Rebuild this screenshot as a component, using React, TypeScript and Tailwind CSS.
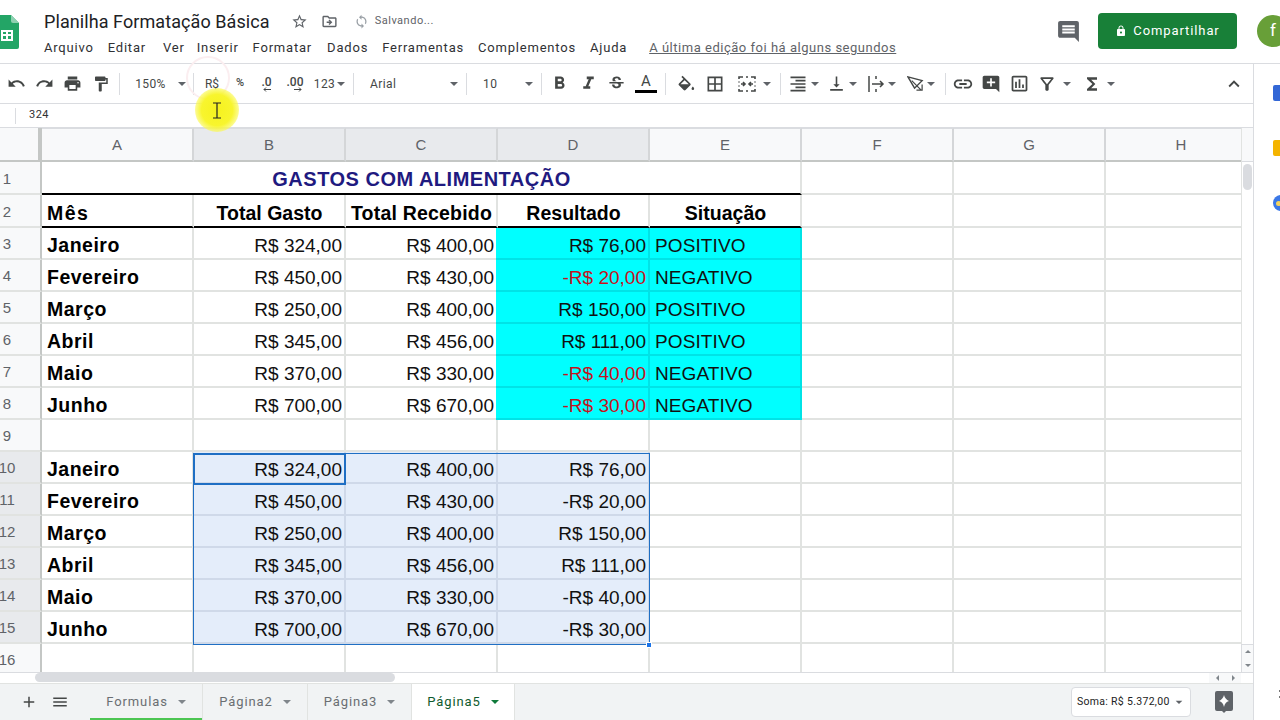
import React from 'react';
import {
  MdUndo, MdRedo, MdPrint, MdFormatPaint, MdFormatBold, MdFormatItalic, MdStrikethroughS,
  MdBorderAll, MdFormatAlignRight, MdVerticalAlignBottom, MdInsertLink,
  MdAddComment, MdOutlineInsertChart, MdOutlineFilterAlt, MdFunctions, MdExpandLess, MdComment, MdLock,
  MdStarBorder, MdOutlineDriveFileMove, MdSync, MdAdd, MdMenu, MdArrowDropDown,
} from 'react-icons/md';

const caret = <span className="inline-block w-0 h-0 border-l-[4px] border-r-[4px] border-t-[4px] border-l-transparent border-r-transparent border-t-[#5f6368]" />;

function Sep({ w = 'w-[8px]' }: { w?: string }) {
  return (
    <div className={`${w} flex justify-center`}>
      <div className="w-px h-[22px] bg-[#dadce0]" />
    </div>
  );
}

function Tool({ w, children, className = '' }: { w: string; children: React.ReactNode; className?: string }) {
  return <div className={`${w} ${className} h-full flex items-center justify-center shrink-0 text-[#444746]`}>{children}</div>;
}

function SheetsLogo() {
  return (
    <svg width="24" height="34" viewBox="0 0 24 34" className="-ml-[5px]">
      <path d="M0 2a2 2 0 0 1 2-2h14l8 8v24a2 2 0 0 1-2 2H2a2 2 0 0 1-2-2z" fill="#23a566" />
      <path d="M16 0l8 8h-6a2 2 0 0 1-2-2z" fill="#8ed1b1" />
      <path d="M6 15h12v11H6z M8 17v2h3v-2z M13 17v2h3v-2z M8 21v3h3v-3z M13 21v3h3v-3z" fill="#fff" fillRule="evenodd" />
    </svg>
  );
}

function FillIcon() {
  return (
    <svg width="19" height="19" viewBox="0 0 22 18" fill="#444746">
      <path fillRule="evenodd" d="M16.560 8.940L7.620 0 6.210 1.410l2.380 2.380-5.150 5.150c-.59.59-.59 1.540 0 2.120l5.500 5.500c.29.29.68.44 1.060.44s.77-.15 1.060-.44l5.500-5.500c.59-.58.59-1.530 0-2.120zM5.210 10L10 5.210 14.790 10H5.210z" />
      <path d="M19.500 12.500s-1.500 1.500-1.500 2.500a1.500 1.500 0 0 0 3 0c0-1-1.500-2.500-1.500-2.500z" />
    </svg>
  );
}

function MergeIcon() {
  return (
    <svg width="18" height="18" viewBox="0 0 18 18" fill="none" stroke="#444746" strokeWidth="1.6">
      <path d="M1 4V2h4M8 2h2M13 2h4v2M1 14v2h4M8 16h2M13 16h4v-2" />
      <path d="M1 6.500v1M1 10.500v1M17 6.500v1M17 10.500v1" />
      <path d="M3 9h4M5 7l2 2-2 2M15 9h-4M13 7l-2 2 2 2" />
    </svg>
  );
}

function WrapIcon() {
  return (
    <svg width="18" height="18" viewBox="0 0 18 18" fill="none" stroke="#444746" strokeWidth="1.500">
      <path d="M2 1v16" />
      <path d="M9 1v3M9 14v3" />
      <path d="M5 9h11M13 6l3 3-3 3" />
    </svg>
  );
}

function RotateIcon() {
  return (
    <svg width="17" height="17" viewBox="0 0 18 18" fill="none" stroke="#444746" strokeWidth="1.500">
      <path d="M1 2l15 4-8 8z" />
      <path d="M5 6l10 10M16 10v6h-6" strokeWidth="1.300" />
    </svg>
  );
}

function SmallArrow({ right }: { right?: boolean }) {
  return (
    <svg width="8" height="5" viewBox="0 0 8 5" fill="none" stroke="#444746" strokeWidth="1" className={`absolute top-[14px] ${right ? 'left-[7px]' : 'left-[2px]'}`}>
      {right ? <path d="M0 2.500h7M5 .500l2 2-2 2" /> : <path d="M8 2.500H1M3 .500l-2 2 2 2" />}
    </svg>
  );
}

function Toolbar() {
  return (
    <div className="h-[40px] flex items-center pl-[2px] pr-[4px] border-b border-[#dadce0] text-[12px] tracking-[0.4px] text-[#444746]">
      <Tool w="w-[28px]"><MdUndo size={19} /></Tool>
      <Tool w="w-[28px]"><MdRedo size={19} /></Tool>
      <Tool w="w-[29px]"><MdPrint size={19} /></Tool>
      <Tool w="w-[28px]"><MdFormatPaint size={18} /></Tool>
      <Sep />
      <Tool w="w-[66px]" className="gap-[12px] pl-[9px]"><span>150%</span>{caret}</Tool>
      <Sep />
      <Tool w="w-[30px]"><span className="tracking-normal">R$</span></Tool>
      <Tool w="w-[26px]"><span className="font-medium tracking-normal text-[11px]">%</span></Tool>
      <Tool w="w-[27px]">
        <span className="relative font-medium tracking-normal -mt-[3px]">.0<SmallArrow /></span>
      </Tool>
      <Tool w="w-[30px]">
        <span className="relative font-medium tracking-normal -mt-[3px]">.00<SmallArrow right /></span>
      </Tool>
      <Tool w="w-[39px]" className="gap-[2px]"><span>123</span>{caret}</Tool>
      <Sep />
      <Tool w="w-[105px]" className="!justify-between pl-[13px] pr-[4px]"><span>Arial</span>{caret}</Tool>
      <Sep />
      <Tool w="w-[67px]" className="!justify-between pl-[13px] pr-[4px]"><span>10</span>{caret}</Tool>
      <Sep />
      <Tool w="w-[29px]"><MdFormatBold size={21} /></Tool>
      <Tool w="w-[28px]"><MdFormatItalic size={21} /></Tool>
      <Tool w="w-[29px]"><MdStrikethroughS size={19} /></Tool>
      <Tool w="w-[30px]">
        <span className="flex flex-col items-center">
          <span className="text-[15px] leading-[15px] tracking-normal">A</span>
          <span className="w-[22px] h-[3px] bg-black mt-[1px]" />
        </span>
      </Tool>
      <Sep />
      <Tool w="w-[30px]" className="ml-[1px]"><FillIcon /></Tool>
      <Tool w="w-[30px]"><MdBorderAll size={20} /></Tool>
      <Tool w="w-[46px]" className="gap-[7px] pl-[2px]"><MergeIcon />{caret}</Tool>
      <Sep />
      <Tool w="w-[38px]" className="gap-[3px]"><MdFormatAlignRight size={20} />{caret}</Tool>
      <Tool w="w-[40px]" className="gap-[3px]"><MdVerticalAlignBottom size={19} />{caret}</Tool>
      <Tool w="w-[39px]" className="gap-[3px]"><WrapIcon />{caret}</Tool>
      <Tool w="w-[40px]" className="gap-[3px]"><RotateIcon />{caret}</Tool>
      <Sep />
      <Tool w="w-[28px]"><MdInsertLink size={22} /></Tool>
      <Tool w="w-[28px]"><MdAddComment size={20} /></Tool>
      <Tool w="w-[28px]"><MdOutlineInsertChart size={21} /></Tool>
      <Tool w="w-[40px]" className="gap-[6px] ml-[1px]"><MdOutlineFilterAlt size={20} />{caret}</Tool>
      <Tool w="w-[40px]" className="gap-[5px] ml-[4px]"><MdFunctions size={20} />{caret}</Tool>
      <div className="ml-auto mr-[4px] text-[#444746]"><MdExpandLess size={22} /></div>
    </div>
  );
}

const columns = ['A', 'B', 'C', 'D', 'E', 'F', 'G', 'H'];
const colW = 'w-[152px]';

type Line = { mes: string; gasto: string; recebido: string; resultado: string; situacao: string };

const lines: Line[] = [
  { mes: 'Janeiro', gasto: 'R$ 324,00', recebido: 'R$ 400,00', resultado: 'R$ 76,00', situacao: 'POSITIVO' },
  { mes: 'Fevereiro', gasto: 'R$ 450,00', recebido: 'R$ 430,00', resultado: '-R$ 20,00', situacao: 'NEGATIVO' },
  { mes: 'Março', gasto: 'R$ 250,00', recebido: 'R$ 400,00', resultado: 'R$ 150,00', situacao: 'POSITIVO' },
  { mes: 'Abril', gasto: 'R$ 345,00', recebido: 'R$ 456,00', resultado: 'R$ 111,00', situacao: 'POSITIVO' },
  { mes: 'Maio', gasto: 'R$ 370,00', recebido: 'R$ 330,00', resultado: '-R$ 40,00', situacao: 'NEGATIVO' },
  { mes: 'Junho', gasto: 'R$ 700,00', recebido: 'R$ 670,00', resultado: '-R$ 30,00', situacao: 'NEGATIVO' },
];

function RowHead({ n, h, active }: { n: number; h: string; active?: boolean }) {
  return (
    <div className={`${h} w-[42px] shrink-0 border-r-2 border-b-2 border-r-[#c4c7c5] border-b-[#e1e3e1] pr-[26px] pt-[3px] flex items-center justify-center text-[15px] text-[#5f6368] ${active ? 'bg-[#e8eaed]' : 'bg-[#f8f9fa]'}`}>
      {n}
    </div>
  );
}

function Cell({ w = colW, className = '', children }: { w?: string; className?: string; children?: React.ReactNode }) {
  return (
    <div className={`${w} shrink-0 h-full flex items-center pl-[3px] pr-[2px] pt-[6px] whitespace-nowrap border-r-2 border-b-2 border-r-[#e1e3e1] border-b-[#e1e3e1] ${className}`}>
      {children}
    </div>
  );
}

function Row({ n, h = 'h-[32px]', active, children }: { n: number; h?: string; active?: boolean; children?: React.ReactNode }) {
  return (
    <div className={`${h} flex`}>
      <RowHead n={n} h={h} active={active} />
      {children}
    </div>
  );
}

function EmptyCells({ count }: { count: number }) {
  return (
    <>
      {Array.from({ length: count }).map((_, i) => (
        <Cell key={i} />
      ))}
    </>
  );
}

const money = 'justify-end text-[19px] text-[#111]';
const bold = 'font-bold text-[19.500px] tracking-[0.5px] text-black !pl-[5px]';
const headCell = 'justify-center text-[19.500px] font-bold !pt-[6px] !border-b-black';
const cyanCell = 'bg-[#00ffff] !border-r-[#00e3e6] !border-b-[#00e3e6]';
const selCell = 'bg-[#e4edfa] !border-r-[#cfd9e9] !border-b-[#cfd9e9]';

function Grid() {
  return (
    <div className="flex-1 flex min-h-0">
      <div className="flex-1 min-w-0 relative overflow-hidden font-['Liberation_Sans',Arial,sans-serif]">
        <div className="h-[34px] flex">
          <div className="w-[42px] shrink-0 bg-[#f8f9fa] border-b-2 border-r-[4px] border-b-[#c4c7c5] border-r-[#c4c7c5]" />
          {columns.map((c, i) => (
            <div
              key={c}
              className={`${colW} shrink-0 flex items-center justify-center pt-[2px] text-[15px] text-[#5f6368] border-t border-r-2 border-b-2 border-t-[#dadce0] border-r-[#d4d6d8] border-b-[#c4c7c5] ${i >= 1 && i <= 3 ? 'bg-[#e8eaed]' : 'bg-[#f8f9fa]'}`}
            >
              {c}
            </div>
          ))}
        </div>

        <Row n={1} h="h-[33px]">
          <Cell w="w-[760px]" className="justify-center text-[20px] font-bold text-[#1f1a80] tracking-[0.5px] !pt-[2px] !border-b-black">
            GASTOS COM ALIMENTAÇÃO
          </Cell>
          <EmptyCells count={3} />
        </Row>
        <Row n={2} h="h-[33px]">
          <Cell className={`${bold} !tracking-[1.500px] !pt-[6px] !border-b-black`}>Mês</Cell>
          <Cell className={headCell}>Total Gasto</Cell>
          <Cell className={`${headCell} tracking-[0.2px]`}>Total Recebido</Cell>
          <Cell className={headCell}>Resultado</Cell>
          <Cell className={headCell}>Situação</Cell>
          <EmptyCells count={3} />
        </Row>
        {lines.map((l, i) => (
          <Row key={l.mes} n={i + 3}>
            <Cell className={bold}>{l.mes}</Cell>
            <Cell className={money}>{l.gasto}</Cell>
            <Cell w="w-[150px]" className={`${money} !border-r-0`}>{l.recebido}</Cell>
            <Cell w="w-[154px]" className={`${money} ${cyanCell} ${l.resultado.startsWith('-') ? '!text-[#c5121d]' : ''}`}>{l.resultado}</Cell>
            <Cell className={`text-[19px] text-[#111] tracking-[0.1px] !pl-[5px] ${cyanCell}`}>{l.situacao}</Cell>
            <EmptyCells count={3} />
          </Row>
        ))}
        <Row n={9}>
          <EmptyCells count={8} />
        </Row>
        {lines.map((l, i) => (
          <Row key={l.mes} n={i + 10} active>
            <Cell className={bold}>{l.mes}</Cell>
            <Cell className={`${money} ${selCell}`}>{l.gasto}</Cell>
            <Cell className={`${money} ${selCell}`}>{l.recebido}</Cell>
            <Cell className={`${money} ${selCell}`}>{l.resultado}</Cell>
            <EmptyCells count={4} />
          </Row>
        ))}
        <Row n={16}>
          <EmptyCells count={8} />
        </Row>

        {/* selection overlay */}
        <div className="absolute left-[193px] top-[325px] w-[457px] h-[192px] border border-[#1f6fc4] pointer-events-none" />
        <div className="absolute left-[193px] top-[325px] w-[153px] h-[32px] border-2 border-[#1f6fc4] pointer-events-none" />
        <div className="absolute left-[646px] top-[514px] w-[6px] h-[6px] bg-[#1a73e8] border border-white" />

        {/* vertical scrollbar */}
        <div className="absolute right-0 top-0 bottom-0 w-[12px] bg-white border-l border-[#e1e3e1]">
          <div className="h-[34px] bg-[#f8f9fa] border-b border-[#dadce0]" />
          <div className="mx-[1px] mt-[2px] h-[26px] rounded-full bg-[#dadce0]" />
        </div>
        <div className="absolute right-0 bottom-[11px] w-[12px] h-[28px] bg-[#f8f9fa] border-l border-t border-[#dadce0] flex flex-col items-center justify-around">
          <span className="w-0 h-0 border-l-[3px] border-r-[3px] border-b-[3px] border-l-transparent border-r-transparent border-b-[#80868b]" />
          <span className="w-0 h-0 border-l-[3px] border-r-[3px] border-t-[3px] border-l-transparent border-r-transparent border-t-[#80868b]" />
        </div>

        {/* horizontal scrollbar */}
        <div className="absolute left-0 right-0 bottom-0 h-[11px] bg-white border-t border-[#dadce0]">
          <div className="absolute left-[35px] top-0 w-[360px] h-[9px] rounded-full bg-[#dadce0]" />
          <div className="absolute right-[12px] top-0 w-[32px] h-full flex items-center justify-around bg-[#f8f9fa]">
            <span className="w-0 h-0 border-t-[3px] border-b-[3px] border-r-[3px] border-t-transparent border-b-transparent border-r-[#80868b]" />
            <span className="w-0 h-0 border-t-[3px] border-b-[3px] border-l-[3px] border-t-transparent border-b-transparent border-l-[#80868b]" />
          </div>
        </div>
      </div>
    </div>
  );
}

function SheetTab({ label, w, active, first }: { label: string; w: string; active?: boolean; first?: boolean }) {
  return (
    <div className={`${w} h-full relative flex items-center justify-center gap-[10px] text-[13px] tracking-[0.9px] border-r border-[#e1e3e1] ${active ? 'bg-white text-[#0f5b2e]' : 'text-[#6a6e72]'}`}>
      <span>{label}</span>
      <span className={`inline-block w-0 h-0 border-l-[4px] border-r-[4px] border-t-[4px] border-l-transparent border-r-transparent ${active ? 'border-t-[#0f7a3a]' : 'border-t-[#80868b]'}`} />
      {first && <div className="absolute left-0 right-0 bottom-0 h-[2px] bg-[#4cc552]" />}
    </div>
  );
}

function Tabs() {
  return (
    <div className="h-[37px] shrink-0 flex items-center bg-[#f1f3f4] border-t border-[#e1e3e1] text-[#444746]">
      <div className="w-[90px] flex items-center pl-[20px] gap-[13px] h-full">
        <MdAdd size={18} />
        <MdMenu size={18} />
      </div>
      <SheetTab label="Formulas" w="w-[113px]" first />
      <SheetTab label="Página2" w="w-[105px]" />
      <SheetTab label="Página3" w="w-[104px]" />
      <SheetTab label="Página5" w="w-[103px]" active />
      <div className="ml-auto flex items-center h-[30px] w-[120px] bg-white rounded-[4px] border border-[#dadce0] px-[5px] justify-between text-[10.500px] text-[#222] tracking-[0.3px]">
        <span>Soma: R$ 5.372,00</span>
        <MdArrowDropDown size={16} className="text-[#5f6368] -mr-[2px]" />
      </div>
      <div className="ml-[24px] mr-[20px]">
        <svg width="18" height="22" viewBox="0 0 18 22" className="block">
          <path d="M2 0h14a2 2 0 0 1 2 2v16a2 2 0 0 1-2 2h-5l-2 2-2-2H2a2 2 0 0 1-2-2V2a2 2 0 0 1 2-2z" fill="#5f6368" />
          <path d="M9 4q1 4 5 6-4 1-5 6-1-5-5-6 4-2 5-6z" fill="#fff" />
        </svg>
      </div>
    </div>
  );
}

function SidePanel() {
  return (
    <div className="w-[27px] shrink-0 border-l border-[#dadce0] bg-white overflow-hidden relative">
      <div className="flex flex-col pl-[19px] pt-[21px] gap-[39px]">
        <div className="w-[16px] h-[16px] rounded-[2px] bg-[#3367d6]" />
        <div className="w-[16px] h-[16px] rounded-[2px] bg-[#f4b400]" />
        <div className="w-[16px] h-[16px] rounded-full bg-[#3b78e7] flex items-center">
          <div className="w-[5px] h-[5px] rounded-full bg-[#f4d35e] ml-[3px]" />
        </div>
      </div>
      <div className="absolute left-[25px] bottom-[22px] flex flex-col gap-[4px]">
        <span className="w-[2px] h-[2px] bg-[#777]" />
        <span className="w-[2px] h-[2px] bg-[#777]" />
      </div>
    </div>
  );
}

export default function App() {
  return (
    <div className="w-[1280px] h-[720px] overflow-hidden relative flex flex-col bg-white font-['Roboto',sans-serif]">
      {/* Header */}
      <div className="h-[64px] shrink-0 flex border-b border-[#dadce0]">
        <div className="w-[44px] pt-[15px] shrink-0"><SheetsLogo /></div>
        <div className="flex-1 min-w-0 pt-[10px]">
          <div className="flex items-center h-[22px] text-[#202124]">
            <span className="text-[18px] tracking-[0.08px]">Planilha Formatação Básica</span>
            <MdStarBorder size={17} className="ml-[21px] text-[#5f6368]" />
            <MdOutlineDriveFileMove size={17} className="ml-[13px] text-[#5f6368]" />
            <MdSync size={15} className="ml-[16px] text-[#9aa0a6]" />
            <span className="ml-[6px] text-[11px] tracking-[0.5px] text-[#5f6368]">Salvando...</span>
          </div>
          <div className="flex items-center h-[21px] mt-[5px] text-[13px] tracking-[0.8px] text-[#303134]">
            <span>Arquivo</span>
            <span className="ml-[14px]">Editar</span>
            <span className="ml-[17px]">Ver</span>
            <span className="ml-[12px]">Inserir</span>
            <span className="ml-[14px]">Formatar</span>
            <span className="ml-[15px]">Dados</span>
            <span className="ml-[14px]">Ferramentas</span>
            <span className="ml-[14px]">Complementos</span>
            <span className="ml-[14px]">Ajuda</span>
            <span className="ml-[22px] underline text-[#5f6368] tracking-[0.52px]">A última edição foi há alguns segundos</span>
          </div>
        </div>
        <div className="flex items-start pt-[13px] shrink-0">
          <MdComment size={25} className="text-[#5f6368] mt-[6px]" />
          <div className="ml-[17px] w-[139px] h-[36px] rounded-[4px] bg-[#188038] text-white flex items-center justify-center gap-[6px] text-[13px] tracking-[0.9px]">
            <MdLock size={12} />
            <span>Compartilhar</span>
          </div>
          <div className="ml-[20px] -mr-[9px] w-[32px] h-[32px] mt-[2px] rounded-full bg-[#689f38] text-white text-[17px] flex items-center justify-center">f</div>
        </div>
      </div>

      <div className="flex-1 min-h-0 flex">
        <div className="flex-1 min-w-0 flex flex-col">
          <Toolbar />
          {/* Formula bar */}
          <div className="h-[24px] shrink-0 flex items-center border-b border-[#dadce0] text-[11px] tracking-[0.5px] text-[#303134]">
            <div className="w-[16px] h-[16px] border-r border-[#dadce0]" />
            <span className="ml-[13px]">324</span>
          </div>
          <Grid />
          <Tabs />
        </div>
        <SidePanel />
      </div>

      {/* click ripple and cursor highlight */}
      <div className="absolute left-[186px] top-[56px] w-[44px] h-[44px] rounded-full border-2 border-[#fbeef0] pointer-events-none" />
      <div className="absolute left-[195px] top-[88px] w-[44px] h-[44px] rounded-full bg-[radial-gradient(circle,#f6f21e_0%,#f8f52e_50%,rgba(253,252,120,0.500)_78%,rgba(255,255,200,0)_100%)] pointer-events-none flex items-center justify-center">
        <svg width="10" height="17" viewBox="0 0 10 17" fill="none" stroke="#222" strokeWidth="1.200"><path d="M1 1h8M1 16h8M5 1v15" /></svg>
      </div>
    </div>
  );
}
